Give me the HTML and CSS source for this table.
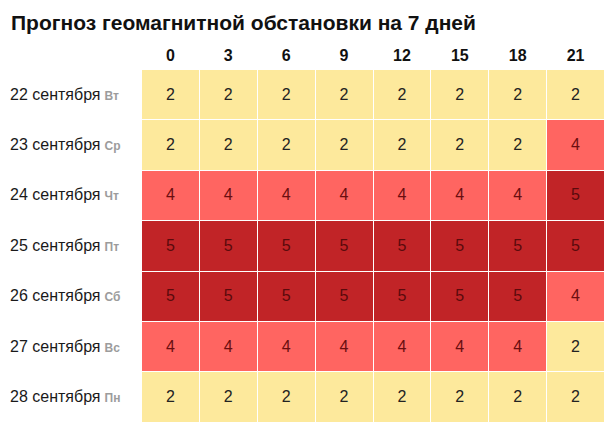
FILE: index.html
```html
<!DOCTYPE html>
<html lang="ru">
<head>
<meta charset="utf-8">
<title>Прогноз геомагнитной обстановки на 7 дней</title>
<link rel="stylesheet" href="styles.css">
</head>
<body>
<div class="page">
  <h1 class="title">Прогноз геомагнитной обстановки на 7 дней</h1>
  <div class="grid">
    <div class="corner"></div>
    <div class="hour">0</div><div class="hour">3</div><div class="hour">6</div><div class="hour">9</div><div class="hour">12</div><div class="hour">15</div><div class="hour">18</div><div class="hour">21</div>

    <div class="day">22 сентября <span class="dow">Вт</span></div>
    <div class="c k2">2</div><div class="c k2">2</div><div class="c k2">2</div><div class="c k2">2</div><div class="c k2">2</div><div class="c k2">2</div><div class="c k2">2</div><div class="c k2">2</div>

    <div class="day">23 сентября <span class="dow">Ср</span></div>
    <div class="c k2">2</div><div class="c k2">2</div><div class="c k2">2</div><div class="c k2">2</div><div class="c k2">2</div><div class="c k2">2</div><div class="c k2">2</div><div class="c k4">4</div>

    <div class="day">24 сентября <span class="dow">Чт</span></div>
    <div class="c k4">4</div><div class="c k4">4</div><div class="c k4">4</div><div class="c k4">4</div><div class="c k4">4</div><div class="c k4">4</div><div class="c k4">4</div><div class="c k5">5</div>

    <div class="day">25 сентября <span class="dow">Пт</span></div>
    <div class="c k5">5</div><div class="c k5">5</div><div class="c k5">5</div><div class="c k5">5</div><div class="c k5">5</div><div class="c k5">5</div><div class="c k5">5</div><div class="c k5">5</div>

    <div class="day">26 сентября <span class="dow">Сб</span></div>
    <div class="c k5">5</div><div class="c k5">5</div><div class="c k5">5</div><div class="c k5">5</div><div class="c k5">5</div><div class="c k5">5</div><div class="c k5">5</div><div class="c k4">4</div>

    <div class="day">27 сентября <span class="dow">Вс</span></div>
    <div class="c k4">4</div><div class="c k4">4</div><div class="c k4">4</div><div class="c k4">4</div><div class="c k4">4</div><div class="c k4">4</div><div class="c k4">4</div><div class="c k2">2</div>

    <div class="day">28 сентября <span class="dow">Пн</span></div>
    <div class="c k2">2</div><div class="c k2">2</div><div class="c k2">2</div><div class="c k2">2</div><div class="c k2">2</div><div class="c k2">2</div><div class="c k2">2</div><div class="c k2">2</div>
  </div>
</div>
</body>
</html>
```
FILE: styles.css
```css
html, body {
  margin: 0;
  padding: 0;
  background: #fff;
}
body {
  font-family: "Liberation Sans", Arial, sans-serif;
  color: #1a1a1a;
}
.page {
  padding: 11px 8px 0 10px;
}
.title {
  margin: 0 0 16px 1px;
  font-size: 21px;
  line-height: 24px;
  font-weight: bold;
  color: #111;
}
.grid {
  display: grid;
  grid-template-columns: 131px repeat(8, 1fr);
  grid-template-rows: 18px;
  grid-auto-rows: 49.4px;
  column-gap: 1px;
  row-gap: 1px;
}
.hour {
  font-size: 16px;
  font-weight: bold;
  line-height: 10px;
  text-align: center;
  color: #111;
}
.day {
  display: flex;
  align-items: center;
  font-size: 16px;
  color: #1a1a1a;
  white-space: nowrap;
}
.dow {
  font-size: 12px;
  font-weight: bold;
  color: #9c9c9c;
  margin-left: 4px;
  padding-top: 2px;
}
.c {
  display: flex;
  align-items: center;
  justify-content: center;
  font-size: 16px;
}
.k2 {
  background: #fde99c;
  color: #222;
}
.k4 {
  background: #ff6561;
  color: #6a0e10;
}
.k5 {
  background: #c12427;
  color: #5a0a0c;
}
```
